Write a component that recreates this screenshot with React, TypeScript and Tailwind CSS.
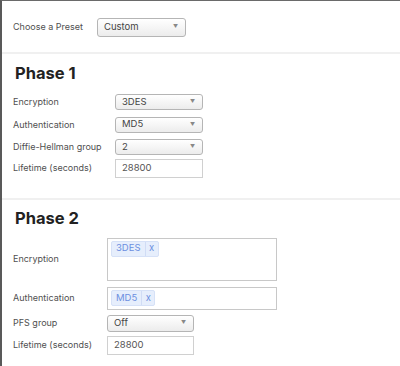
import React from "react";

function Select({ value, w, h = 16 }: { value: string; w: number; h?: number }) {
  return (
    <div
      className="flex items-center justify-between rounded-[3px] border border-[#b5b5b5] bg-gradient-to-b from-white to-[#ececec] pl-[6px] pr-[7px] text-[9.5px] text-[#444]"
      style={{ width: w, height: h }}
    >
      <span>{value}</span>
      <span className="text-[5px] text-[#888]">▼</span>
    </div>
  );
}

function Input({ value, w, h = 19 }: { value: string; w: number; h?: number }) {
  return (
    <div
      className="flex items-center border border-[#d0d0d0] bg-white pl-[6px] text-[9.5px] text-[#555]"
      style={{ width: w, height: h }}
    >
      {value}
    </div>
  );
}

function Tag({ label }: { label: string }) {
  return (
    <div className="flex h-[16px] items-center rounded-[2px] border border-[#d6e1f7] bg-[#e6eefc] text-[9.5px] text-[#6c8fe0]">
      <span className="px-[4px]">{label}</span>
      <span className="flex h-full items-center border-l border-[#d0dcf5] px-[3.5px]">x</span>
    </div>
  );
}

export default function App() {
  return (
    <div
      className="h-[366px] w-[400px] overflow-hidden border-l-2 border-t border-l-[#595959] border-t-[#6a6a6a] bg-white text-[#4f4f4f]"
      style={{ fontFamily: "Inter, 'Noto Sans', sans-serif" }}
    >
      <div className="flex h-[51px] items-center pl-[11px] pt-[1px] text-[9px]">
        <span className="w-[84px]">Choose a Preset</span>
        <Select value="Custom" w={89} h={19} />
      </div>
      <div className="border-t-2 border-[#f0f0f0] pl-[11px]">
        <div className="pt-[9px] pl-[2px] text-[16.5px] font-bold leading-[20px] text-[#222]">Phase 1</div>
        <div className="mt-[11px] flex flex-col gap-[6.5px] text-[9px]">
          <div className="flex items-center">
            <span className="w-[102px]">Encryption</span>
            <Select value="3DES" w={88} />
          </div>
          <div className="flex items-center">
            <span className="w-[102px]">Authentication</span>
            <Select value="MD5" w={88} />
          </div>
          <div className="flex items-center">
            <span className="w-[102px]">Diffie-Hellman group</span>
            <Select value="2" w={88} />
          </div>
          <div className="-mt-[3px] flex items-center">
            <span className="w-[102px]">Lifetime (seconds)</span>
            <Input value="28800" w={88} />
          </div>
        </div>
      </div>
      <div className="mt-[20px] border-t-2 border-[#f0f0f0] pl-[11px]">
        <div className="pt-[8px] pl-[2px] text-[16.5px] font-bold leading-[20px] text-[#222]">Phase 2</div>
        <div className="mt-[10px] flex flex-col text-[9px]">
          <div className="flex items-center">
            <span className="w-[94px]">Encryption</span>
            <div className="h-[43px] w-[170px] border border-[#c8c8c8] bg-white p-[2px] pl-[3px]">
              <div className="flex">
                <Tag label="3DES" />
              </div>
            </div>
          </div>
          <div className="mt-[6px] flex items-center">
            <span className="w-[94px]">Authentication</span>
            <div className="flex h-[23px] w-[170px] items-center border border-[#c8c8c8] bg-white pl-[3px]">
              <Tag label="MD5" />
            </div>
          </div>
          <div className="mt-[5px] flex items-center">
            <span className="w-[94px]">PFS group</span>
            <Select value="Off" w={87} h={17} />
          </div>
          <div className="mt-[4px] flex items-center">
            <span className="w-[94px]">Lifetime (seconds)</span>
            <Input value="28800" w={87} h={19} />
          </div>
        </div>
      </div>
    </div>
  );
}
